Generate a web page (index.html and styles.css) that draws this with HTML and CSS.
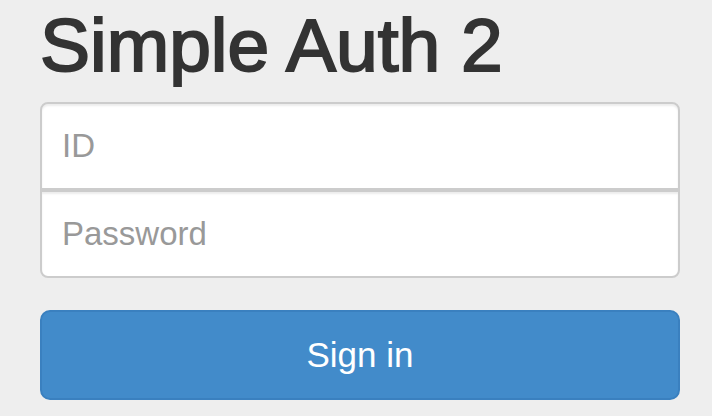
FILE: index.html
```html
<!DOCTYPE html>
<html lang="en">
<head>
<meta charset="utf-8">
<title>Simple Auth 2</title>
<link rel="stylesheet" href="styles.css">
</head>
<body>
<form class="signin">
  <h1 class="signin-title">Simple Auth 2</h1>
  <div class="field-group">
    <input class="field field-top" type="text" placeholder="ID">
    <input class="field field-bottom" type="password" placeholder="Password">
  </div>
  <button class="btn-signin" type="submit">Sign in</button>
</form>
</body>
</html>
```
FILE: styles.css
```css
html, body {
  margin: 0;
  padding: 0;
  background: #eeeeee;
}

body {
  font-family: "Liberation Sans", Arial, Helvetica, sans-serif;
  color: #333333;
}

.signin {
  width: 640px;
  padding: 4px 0 0 40px;
  display: flex;
  flex-direction: column;
}

.signin-title {
  margin: 0 0 16px 0;
  font-size: 75px;
  line-height: 82px;
  font-weight: 400;
  color: #333333;
  -webkit-text-stroke: 2px #333333;
  height: 82px;
}

.field-group {
  display: flex;
  flex-direction: column;
  margin-bottom: 32px;
}

.field {
  box-sizing: border-box;
  display: block;
  width: 100%;
  height: 88px;
  margin: 0;
  padding: 0 20px;
  font-family: "Liberation Sans", Arial, Helvetica, sans-serif;
  font-size: 33px;
  color: #555555;
  background: #ffffff;
  border: 2px solid #cccccc;
  box-shadow: inset 0 2px 2px rgba(0, 0, 0, 0.075);
  outline: none;
}

.field::placeholder {
  color: #999999;
}

.field-top {
  border-radius: 8px 8px 0 0;
}

.field-bottom {
  border-radius: 0 0 8px 8px;
}

.btn-signin {
  box-sizing: border-box;
  width: 100%;
  height: 90px;
  margin: 0;
  padding: 0;
  font-family: "Liberation Sans", Arial, Helvetica, sans-serif;
  font-size: 35px;
  color: #ffffff;
  background: #428bca;
  border: 2px solid #3a80bf;
  border-radius: 10px;
  cursor: pointer;
}
```
